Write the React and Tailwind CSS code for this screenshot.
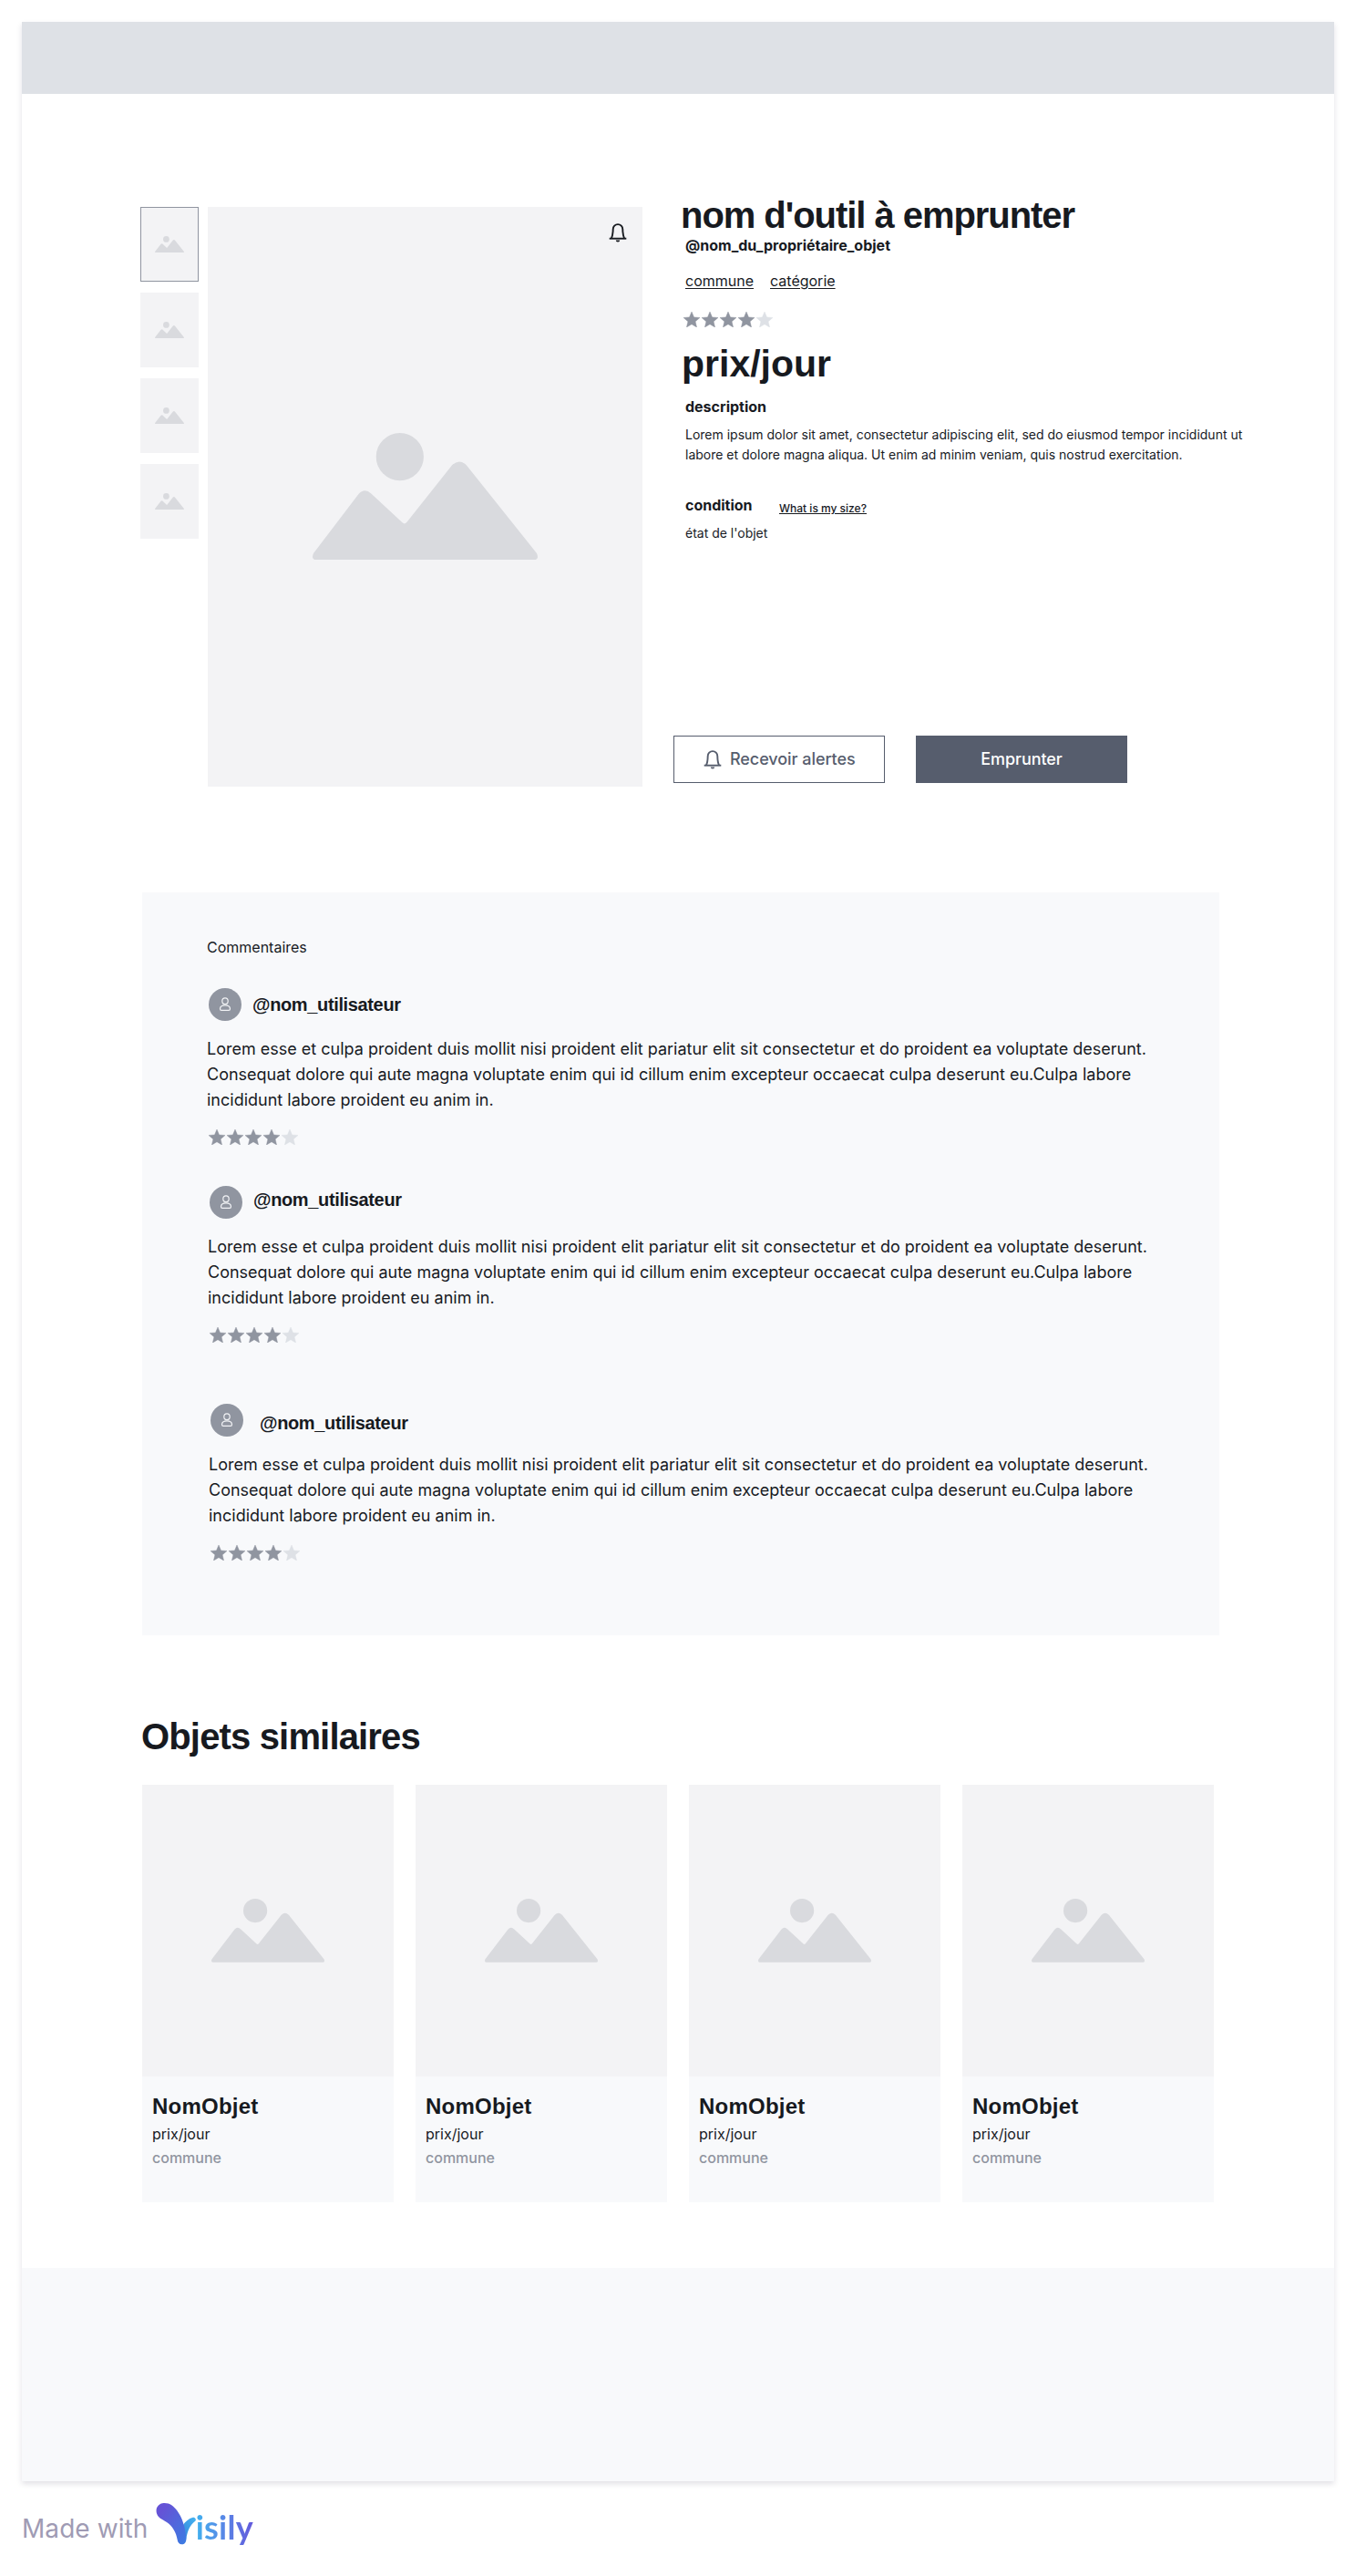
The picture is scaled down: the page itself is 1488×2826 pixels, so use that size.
import React from "react";

const HEADING = "font-['Liberation_Sans',Arial,sans-serif] font-bold text-[#171a1f]";

function Mountains({ className }) {
  return (
    <svg viewBox="0 0 247 139" className={className} fill="#d9dade" aria-hidden="true">
      <circle cx="95.8" cy="26.1" r="26.1" />
      <path d="M1 132L50.5 67Q57 60 64.3 66.5L98.8 98.6Q101 100.5 103.3 98L152.9 35.5Q160.9 27.5 169 35.5L246 132Q249 139 243 139H4Q-2 139 1 132Z" />
    </svg>
  );
}

function Bell({ className }) {
  return (
    <svg viewBox="0 0 24 24" className={className} fill="none" stroke="currentColor" strokeWidth="1.9" aria-hidden="true">
      <path d="M2.7 18.7h18.6" />
      <path d="M5 18.4C6.4 15.5 6.6 13 6.7 8.4a5.3 5.3 0 0 1 10.6 0C17.4 13 17.6 15.5 19 18.4" />
      <path d="M9.8 20.5h4.4a2.2 1.9 0 0 1-4.4 0z" fill="currentColor" stroke="none" />
    </svg>
  );
}

function Stars({ className = "" }) {
  return (
    <div className={`flex gap-0.5 ${className}`}>
      {[0, 1, 2, 3, 4].map((i) => (
        <svg
          key={i}
          viewBox="2 2 20 19"
          preserveAspectRatio="none"
          className={i < 4 ? "h-[17px] w-[18px] text-[#9095a0]" : "h-[17px] w-[18px] text-[#dee1e6]"}
          fill="currentColor"
          stroke="currentColor"
          strokeWidth="0.5"
          strokeLinejoin="round"
          aria-hidden="true"
        >
          <path d="M12 17.27L18.18 21l-1.64-7.03L22 9.24l-7.19-.61L12 2 9.19 8.63 2 9.24l5.46 4.73L5.82 21z" />
        </svg>
      ))}
    </div>
  );
}

function Avatar() {
  return (
    <div className="h-9 w-9 shrink-0 rounded-full bg-[#9095a0]">
      <svg viewBox="0 0 36 36" className="h-9 w-9" fill="none" stroke="#f1f2f5" strokeWidth="1.2" aria-hidden="true">
        <ellipse cx="18" cy="14.2" rx="3.2" ry="3.3" />
        <path d="M12.5 22.8C12.5 20 15 18.8 18 18.8S23.5 20 23.5 22.8C23.5 24 22.8 24.4 22 24.4H14C13.2 24.4 12.5 24 12.5 22.8Z" />
      </svg>
    </div>
  );
}

function Comment({ className, nameClass }) {
  return (
    <article className={className}>
      <div className="flex h-9 items-start pl-0.5">
        <Avatar />
        <h3 className={`${HEADING} text-xl leading-7 tracking-[-0.36px] ${nameClass}`}>@nom_utilisateur</h3>
      </div>
      <p className="mt-[17px] whitespace-nowrap text-lg leading-7">
        Lorem esse et culpa proident duis mollit nisi proident elit pariatur elit sit consectetur et do proident ea voluptate deserunt.
        <br />
        Consequat dolore qui aute magna voluptate enim qui id cillum enim excepteur occaecat culpa deserunt eu.Culpa labore
        <br />
        incididunt labore proident eu anim in.
      </p>
      <Stars className="mt-[18px] pl-0.5" />
    </article>
  );
}

function Card() {
  return (
    <article className="h-[458px] w-[276px] bg-[#f8f9fb]">
      <div className="flex h-80 items-center justify-center bg-[#f3f3f5]">
        <Mountains className="w-[124px]" />
      </div>
      <div className="pl-3 pt-[17px]">
        <h3 className={`${HEADING} -ml-px text-2xl leading-8 tracking-[0.24px]`}>NomObjet</h3>
        <p className="-ml-px mt-0.5 text-base leading-6">prix/jour</p>
        <p className="-ml-px mt-0.5 text-base font-medium leading-6 text-[#9095a0]">commune</p>
      </div>
    </article>
  );
}

function VisilyLogo() {
  return (
    <div className="flex items-start">
      <svg viewBox="18 30 134 141" className="mt-[23px] h-[47px] w-[44.67px]" aria-hidden="true">
        <defs>
          <linearGradient id="stem" x1="0.1" y1="0.1" x2="0.9" y2="1">
            <stop offset="0.1" stopColor="#6553d6" />
            <stop offset="1" stopColor="#3d7ae2" />
          </linearGradient>
          <linearGradient id="arm" x1="1" y1="0" x2="0" y2="1">
            <stop offset="0" stopColor="#45b4f0" />
            <stop offset="1" stopColor="#3585dc" />
          </linearGradient>
        </defs>
        <path d="M106 108C114 94 126 84 140 80C148 79 153 87 147 93C132 105 122 122 118 152L104 148Z" fill="url(#arm)" />
        <path d="M44 33C64 32 76 42 88 58C104 80 116 112 118 152C118 162 112 169 104 169C95 169 90 163 89 154C85 130 74 110 54 96C44 89 34 86 27 78C12 60 21 34 44 33Z" fill="url(#stem)" />
      </svg>
      <span className="-ml-px mt-7 bg-gradient-to-r from-[#3fb0ee] to-[#6258dc] bg-clip-text font-['Lato',sans-serif] text-[36px] font-bold leading-[44px] tracking-[0.24px] text-transparent">
        isily
      </span>
    </div>
  );
}

export default function App() {
  return (
    <div className="h-[2826px] w-[1488px] overflow-hidden bg-white px-6 pt-6 font-['Inter',sans-serif] text-[#171a1f]">
      <div className="flex h-[2698px] flex-col bg-white shadow-[0_3px_6px_rgba(30,20,60,0.13)]">
        <header className="h-[79px] shrink-0 bg-[#dee1e6]" />

        <section className="flex h-[876px] shrink-0 items-start pl-[130px] pt-[113px]">
          <div className="mt-[11px] flex gap-2.5">
            <div className="flex flex-col gap-3">
              {[0, 1, 2, 3].map((i) => (
                <div
                  key={i}
                  className={
                    i === 0
                      ? "flex h-[82px] w-16 items-center justify-center border border-[#9095a0] bg-[#f3f3f5]"
                      : "flex h-[82px] w-16 items-center justify-center bg-[#f3f3f5]"
                  }
                >
                  <Mountains className="w-8" />
                </div>
              ))}
            </div>
            <div className="relative flex h-[636px] w-[477px] items-center justify-center bg-[#f3f3f5]">
              <Mountains className="mb-px w-[247px]" />
              <Bell className="absolute right-[15.5px] top-4 h-6 w-6" />
            </div>
          </div>

          <div className="ml-[34px] flex flex-col">
            <h1 className={`${HEADING} ml-2 whitespace-nowrap text-[40px] leading-10 tracking-[-1.05px]`}>nom d'outil à emprunter</h1>
            <p className="ml-[13px] mt-px text-base font-bold leading-6">@nom_du_propriétaire_objet</p>
            <div className="ml-[13px] mt-[15px] flex gap-[18px] text-base leading-6 underline underline-offset-2">
              <span>commune</span>
              <span>catégorie</span>
            </div>
            <Stars className="ml-[11px] mt-[22px]" />
            <h2 className={`${HEADING} ml-[9px] mt-5 text-[41px] leading-10`}>prix/jour</h2>
            <h3 className="ml-[13px] mt-[15px] text-base font-bold leading-6">description</h3>
            <p className="ml-[13px] mt-2 whitespace-nowrap text-sm leading-[22px]">
              Lorem ipsum dolor sit amet, consectetur adipiscing elit, sed do eiusmod tempor incididunt ut
              <br />
              labore et dolore magna aliqua. Ut enim ad minim veniam, quis nostrud exercitation.
            </p>
            <div className="ml-[13px] mt-8 flex h-6">
              <h3 className="w-[103px] text-base font-bold leading-6">condition</h3>
              <span className="mt-1.5 text-xs font-medium leading-5 underline">What is my size?</span>
            </div>
            <p className="ml-[13px] mt-2 text-sm leading-[22px]">état de l'objet</p>
            <div className="mt-[211px] flex gap-[34px] text-lg leading-7 tracking-[-0.06px]">
              <button className="flex h-[52px] w-[232px] items-center gap-[7px] border border-[#565d6d] pl-[30px] font-medium text-[#565d6d]">
                <Bell className="h-6 w-6" />
                Recevoir alertes
              </button>
              <button className="flex h-[52px] w-[232px] items-center justify-center bg-[#565d6d] font-medium text-white">Emprunter</button>
            </div>
          </div>
        </section>

        <section className="ml-[132px] h-[815px] w-[1182px] shrink-0 bg-[#f8f9fb] pl-[71px] pt-12">
          <h2 className="text-base leading-6">Commentaires</h2>
          <Comment className="mt-[33px]" nameClass="ml-3 mt-1" />
          <Comment className="ml-px mt-[45px]" nameClass="ml-3 mt-px" />
          <Comment className="ml-0.5 mt-[67px]" nameClass="ml-[18px] mt-[7px]" />
        </section>

        <section className="pl-[132px] pt-[87px]">
          <h2 className={`${HEADING} -ml-px text-[40px] leading-[48px] tracking-[-0.84px]`}>Objets similaires</h2>
          <div className="mt-[29px] flex gap-6">
            <Card />
            <Card />
            <Card />
            <Card />
          </div>
        </section>

        <footer className="mt-[72px] h-[234px] shrink-0 bg-[#f8f9fb]" />
      </div>

      <div className="flex items-start">
        <span className="mt-8 w-[147px] whitespace-nowrap text-[28px] leading-10 tracking-[0.06px] text-[#9f9bb4]">Made with</span>
        <VisilyLogo />
      </div>
    </div>
  );
}
